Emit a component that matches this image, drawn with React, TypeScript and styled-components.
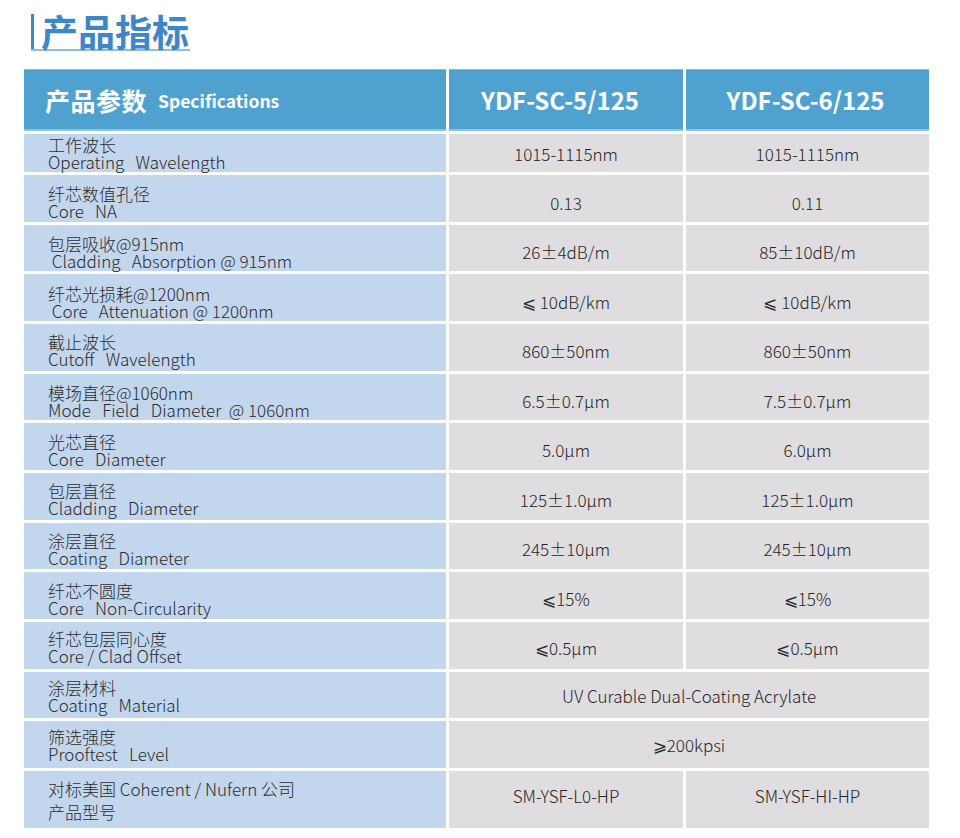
import React from "react";
import styled, { createGlobalStyle } from "styled-components";

const Global = createGlobalStyle`
  html, body { margin: 0; padding: 0; background: #ffffff; }
  body { font-family: "Noto Sans CJK SC", "Noto Sans", sans-serif; }
`;

const Page = styled.div`
  width: 960px;
  height: 838px;
  background: #ffffff;
  overflow: hidden;
`;

const TitleWrap = styled.div`
  padding: 14px 0 0 31px;
  height: 69px;
  box-sizing: border-box;
`;

const Title = styled.h1`
  display: inline-flex;
  align-items: center;
  gap: 7px;
  margin: 0;
  height: 35px;
  font-size: 37px;
  font-weight: 700;
  line-height: 35px;
  color: #3d87c8;
  border-bottom: 2px solid #8fbbe4;
  padding-right: 1px;
`;

const TitleBar = styled.span`
  width: 3px;
  height: 35px;
  background: #3d87c8;
`;

const Table = styled.div`
  margin-left: 24px;
  display: grid;
  grid-template-columns: 422px 234px 243px;
  column-gap: 3px;
  row-gap: 3px;
  width: 905px;
`;

const HeadCell = styled.div<{ $left?: boolean; $shift?: number }>`
  height: 62px;
  box-sizing: border-box;
  background: #4fa2d0;
  border-top: 1px solid #7cbde0;
  border-bottom: 2px solid #8cc6e6;
  display: flex;
  align-items: center;
  justify-content: ${(p) => (p.$left ? "flex-start" : "center")};
  padding-left: ${(p) => (p.$left ? "21px" : "0")};
  padding-right: ${(p) => (p.$shift ? `${p.$shift}px` : "0")};
  color: #ffffff;
  font-weight: 700;
  font-size: 24px;
  white-space: pre;
`;

const HeadCn = styled.span`
  font-size: 25px;
  letter-spacing: 0.5px;
`;

const HeadEn = styled.span`
  font-size: 17.5px;
  margin-left: 11px;
  padding-top: 2px;
`;

const LabelCell = styled.div<{ $h: number; $off?: number }>`
  height: ${(p) => p.$h}px;
  box-sizing: border-box;
  padding-top: ${(p) => (p.$off ?? 0) * 2}px;
  background: #c2d6ee;
  display: flex;
  flex-direction: column;
  justify-content: center;
  padding-left: 24px;
  color: #2c2c2c;
  font-size: 17px;
  font-weight: 300;
  line-height: 17px;
  white-space: pre;
`;

const LabelTall = styled(LabelCell)`
  line-height: 23px;
  padding-top: 2px;
`;

const ValueCell = styled.div<{ $h: number; $span?: boolean; $off?: number }>`
  height: ${(p) => p.$h}px;
  box-sizing: border-box;
  padding-top: ${(p) => (p.$off && p.$off > 0 ? p.$off * 2 : 0)}px;
  padding-bottom: ${(p) => (p.$off && p.$off < 0 ? -p.$off * 2 : 0)}px;
  background: #dfdde0;
  display: flex;
  align-items: center;
  justify-content: center;
  grid-column: ${(p) => (p.$span ? "2 / span 2" : "auto")};
  color: #262626;
  font-size: 17px;
  font-weight: 300;
  white-space: pre;
`;

type Row = { cn: string; en: string; v1: string; v2?: string; off: number };

const rows: Row[] = [
  { cn: "工作波长", en: "Operating   Wavelength", v1: "1015-1115nm", v2: "1015-1115nm", off: 0 },
  { cn: "纤芯数值孔径", en: "Core   NA", v1: "0.13", v2: "0.11", off: 4 },
  { cn: "包层吸收@915nm", en: " Cladding   Absorption @ 915nm", v1: "26±4dB/m", v2: "85±10dB/m", off: 4 },
  { cn: "纤芯光损耗@1200nm", en: " Core   Attenuation @ 1200nm", v1: "⩽ 10dB/km", v2: "⩽ 10dB/km", off: 4 },
  { cn: "截止波长", en: "Cutoff   Wavelength", v1: "860±50nm", v2: "860±50nm", off: 3 },
  { cn: "模场直径@1060nm", en: "Mode   Field   Diameter  @ 1060nm", v1: "6.5±0.7µm", v2: "7.5±0.7µm", off: 4 },
  { cn: "光芯直径", en: "Core   Diameter", v1: "5.0µm", v2: "6.0µm", off: 3 },
  { cn: "包层直径", en: "Cladding   Diameter", v1: "125±1.0µm", v2: "125±1.0µm", off: 3 },
  { cn: "涂层直径", en: "Coating   Diameter", v1: "245±10µm", v2: "245±10µm", off: 3 },
  { cn: "纤芯不圆度", en: "Core   Non-Circularity", v1: "⩽15%", v2: "⩽15%", off: 3 },
  { cn: "纤芯包层同心度", en: "Core / Clad Offset", v1: "⩽0.5µm", v2: "⩽0.5µm", off: 2 },
  { cn: "涂层材料", en: "Coating   Material", v1: "UV Curable Dual-Coating Acrylate", off: 1 },
  { cn: "筛选强度", en: "Prooftest   Level", v1: "⩾200kpsi", off: 0 },
];

export default function App() {
  return (
    <Page>
      <Global />
      <TitleWrap>
        <Title>
          <TitleBar />
          产品指标
        </Title>
      </TitleWrap>
      <Table>
        <HeadCell $left>
          <HeadCn>产品参数</HeadCn>
          <HeadEn>Specifications</HeadEn>
        </HeadCell>
        <HeadCell $shift={12}>YDF-SC-5/125</HeadCell>
        <HeadCell $shift={4}>YDF-SC-6/125</HeadCell>
        {rows.map((r, i) => {
          const h = i === 0 ? 38 : 46.67;
          return (
            <React.Fragment key={r.cn}>
              <LabelCell $h={h} $off={r.off}>
                <span>{r.cn}</span>
                <span>{r.en}</span>
              </LabelCell>
              {r.v2 === undefined ? (
                <ValueCell $h={h} $off={r.off} $span>
                  {r.v1}
                </ValueCell>
              ) : (
                <>
                  <ValueCell $h={h} $off={r.off}>{r.v1}</ValueCell>
                  <ValueCell $h={h} $off={r.off}>{r.v2}</ValueCell>
                </>
              )}
            </React.Fragment>
          );
        })}
        <LabelTall $h={57}>
          <span>对标美国 Coherent / Nufern 公司</span>
          <span>产品型号</span>
        </LabelTall>
        <ValueCell $h={57} $off={-4}>SM-YSF-L0-HP</ValueCell>
        <ValueCell $h={57} $off={-4}>SM-YSF-HI-HP</ValueCell>
      </Table>
    </Page>
  );
}
